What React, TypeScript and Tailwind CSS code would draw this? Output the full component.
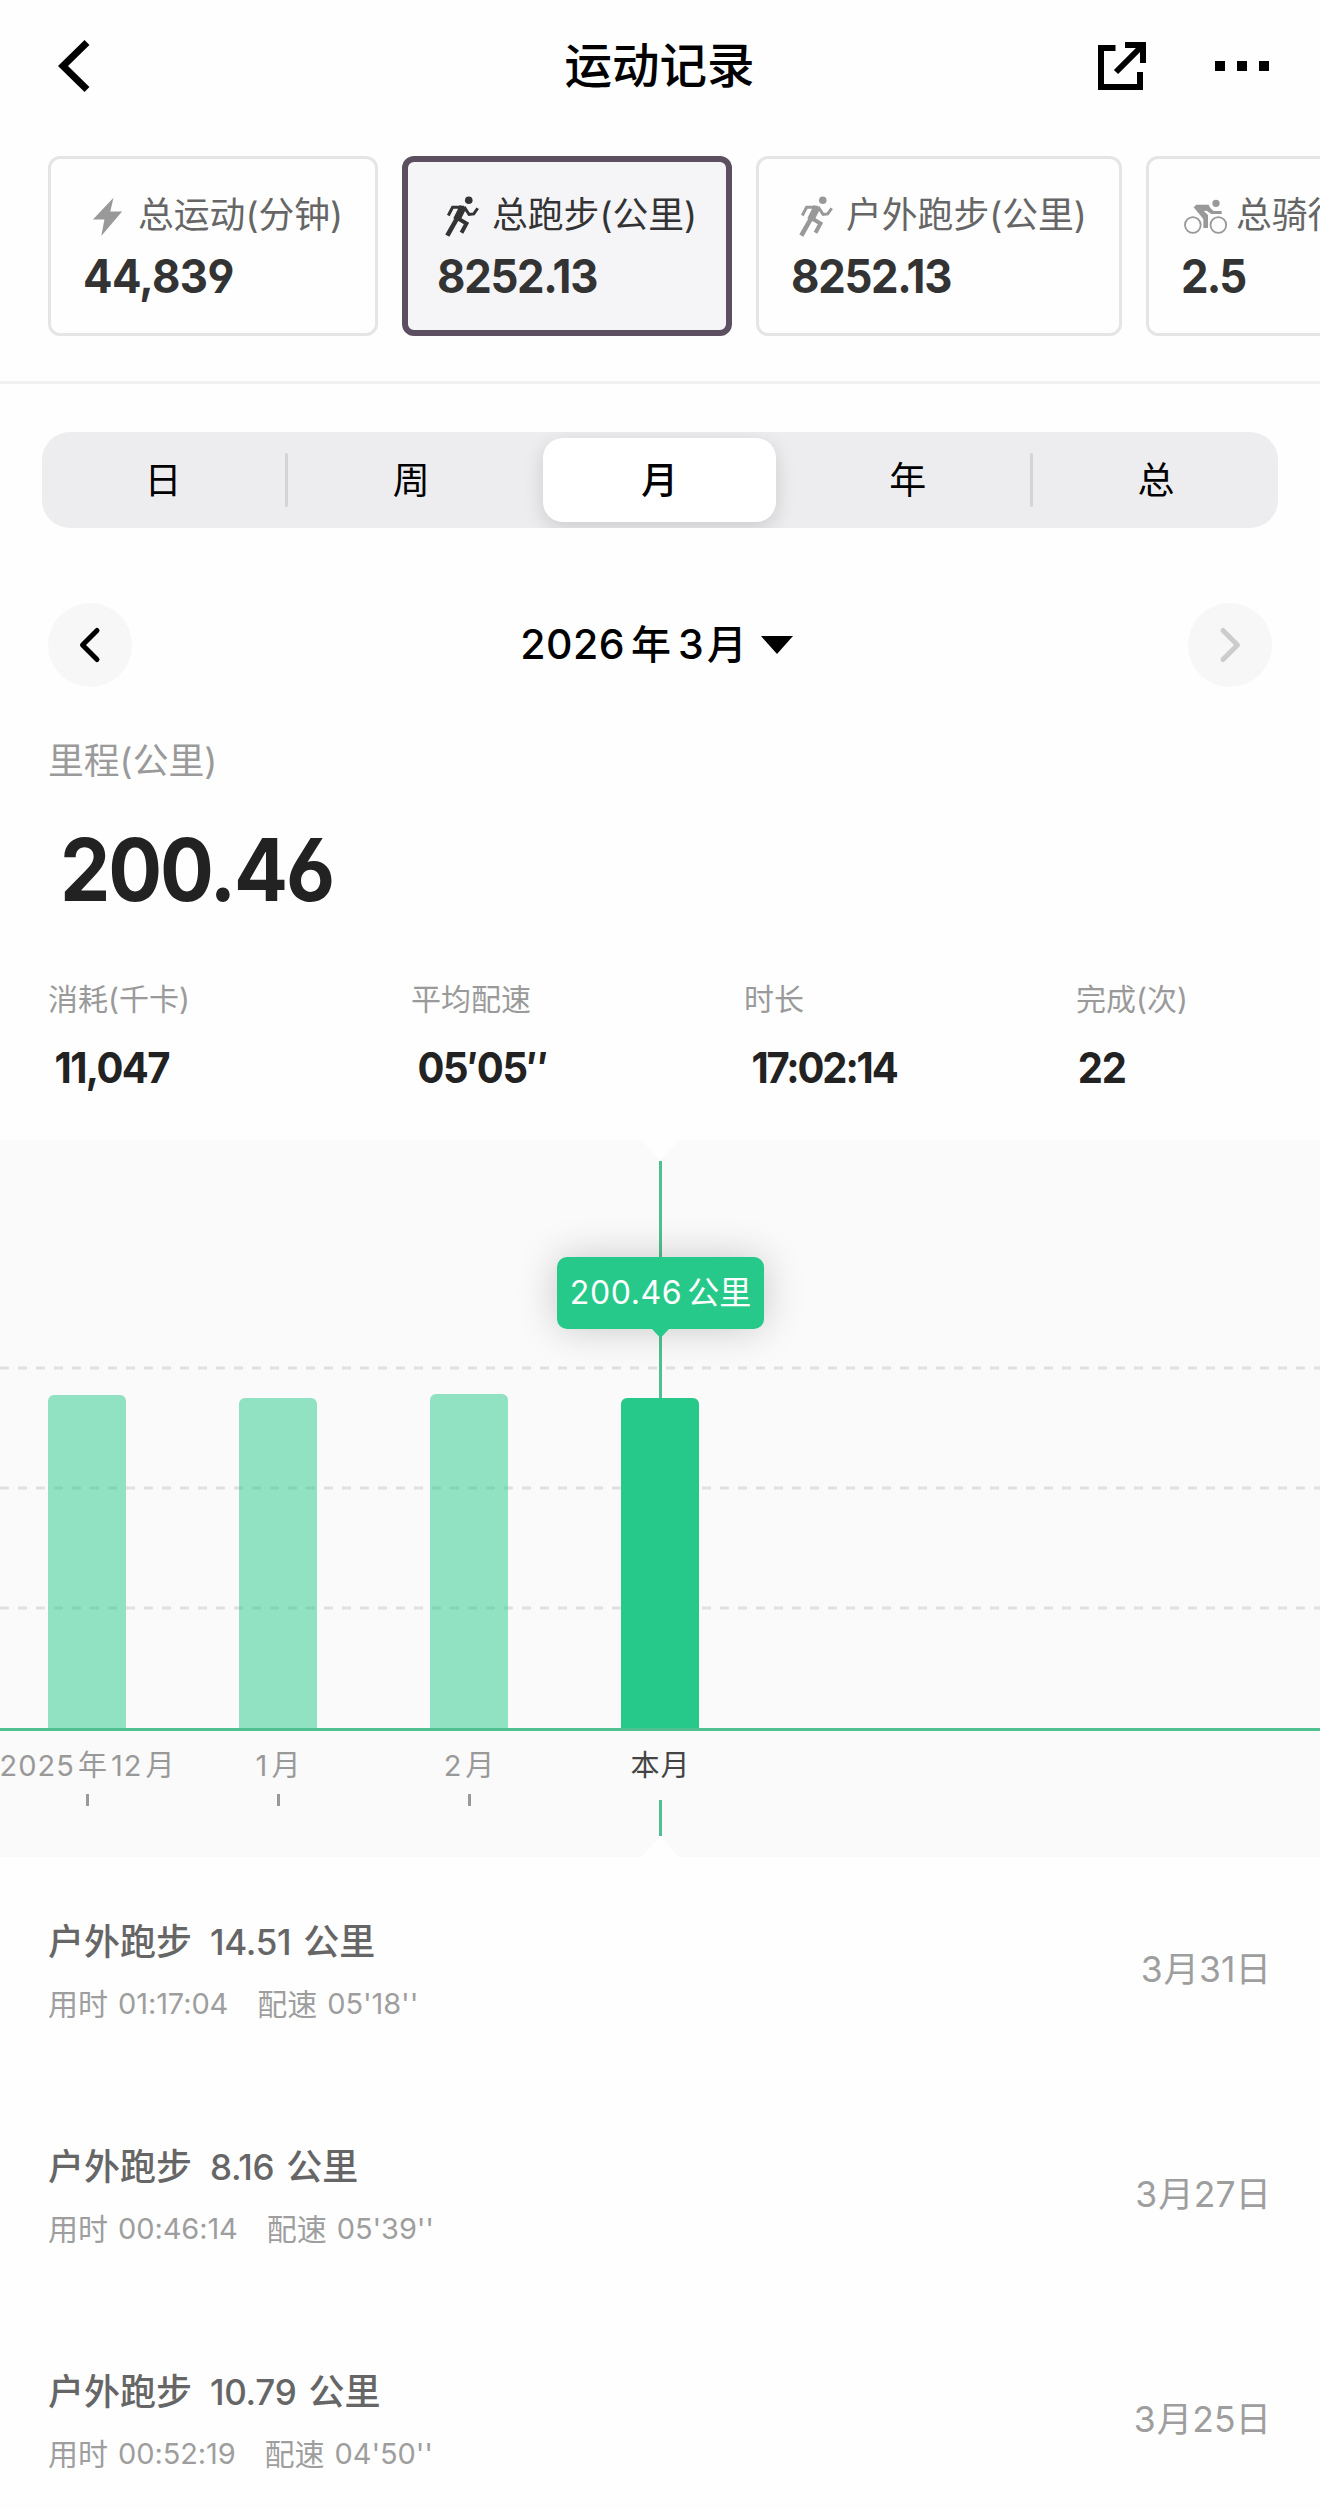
import { useState } from 'react';
import type { ReactNode } from 'react';
import clsx from 'clsx';

const CARDS = [
  { id: 'all', label: '总运动(分钟)', value: '44,839', icon: <BoltIcon />, width: 'w-[330px]', tracking: 'tracking-[-0.7px]' },
  { id: 'run', label: '总跑步(公里)', value: '8252.13', icon: <RunIcon />, width: 'w-[330px]', tracking: 'tracking-[-1.4px]' },
  { id: 'outdoor', label: '户外跑步(公里)', value: '8252.13', icon: <RunIcon />, width: 'w-[366px]', tracking: 'tracking-[-1.4px]' },
  { id: 'ride', label: '总骑行(公里)', value: '2.5', icon: <RideIcon />, width: 'w-[330px]', tracking: 'tracking-[-2px]' },
];

const PERIODS = ['日', '周', '月', '年', '总'];

const STATS = [
  { label: '消耗(千卡)', value: '11,047', width: 'w-[363px]', style: 'pl-[7px] tracking-[-1.7px]' },
  { label: '平均配速', value: '05′05″', width: 'w-[333px]', style: 'pl-[7px] tracking-[-1.5px]' },
  { label: '时长', value: '17:02:14', width: 'w-[332px]', style: 'pl-[8px] tracking-[-2.3px]' },
  { label: '完成(次)', value: '22', width: 'w-[180px]', style: 'pl-[2px] tracking-[-1.5px]' },
];

const BARS = [
  { label: ['2025', '年', '12', '月'], height: 333 },
  { label: ['1', '月'], height: 330 },
  { label: ['2', '月'], height: 334 },
  { label: ['本月'], height: 330, active: true },
];

const RECORDS = [
  { km: '14.51', time: '01:17:04', pace: "05'18''", day: '31' },
  { km: '8.16', time: '00:46:14', pace: "05'39''", day: '27' },
  { km: '10.79', time: '00:52:19', pace: "04'50''", day: '25' },
];

function BoltIcon() {
  return (
    <svg width="38" height="43" viewBox="90 194 38 43" fill="currentColor">
      <path d="M114.5 196.7 93.9 218.6h11.5L102.3 235l20.8-24.6h-11.8z" />
    </svg>
  );
}

function RunIcon() {
  return (
    <svg width="38" height="43" viewBox="70 70 115 130" fill="none" stroke="currentColor">
      <circle cx="148" cy="86" r="11.5" fill="currentColor" stroke="none" />
      <path d="M86 132 99 107h35" strokeWidth="9" />
      <path d="M131 105 111 145" strokeWidth="22" />
      <path d="M113 140 83 193" strokeWidth="14" />
      <path d="m114 140 27 16-15 28" strokeWidth="12" />
      <path d="m134 106 15 23 14-2 12-17" strokeWidth="9" />
    </svg>
  );
}

function RideIcon() {
  return (
    <svg width="44" height="43" viewBox="313 42 132 129" fill="none" stroke="currentColor">
      <circle cx="409" cy="67" r="11" fill="currentColor" stroke="none" />
      <circle cx="339.5" cy="132" r="23.5" strokeWidth="5.500" />
      <circle cx="416" cy="132" r="23.5" strokeWidth="5.500" />
      <path d="m342 79 8-8h37l5 10 10 9h24v9h-31l-14-10-9 1 13 12v39h-14v-27z" fill="currentColor" stroke="none" />
    </svg>
  );
}

// Numbers in the heavy display style: tight tracking, open 6 and 9.
function Figure({ className, children }: { className?: string; children: ReactNode }) {
  return (
    <span className={clsx("origin-left scale-x-[0.93] font-bold [font-feature-settings:'cv03','cv04']", className)}>
      {children}
    </span>
  );
}

function NavButton({ dir, disabled }: { dir: 'prev' | 'next'; disabled?: boolean }) {
  return (
    <button
      type="button"
      disabled={disabled}
      aria-label={dir}
      className={clsx(
        'flex size-[84px] items-center justify-center rounded-full bg-[#f7f7f7]',
        disabled ? 'text-[#cccccc]' : 'text-black',
      )}
    >
      <svg
        width="24"
        height="38"
        viewBox="0 0 24 38"
        fill="none"
        stroke="currentColor"
        strokeWidth="5"
        strokeLinecap="round"
        strokeLinejoin="round"
      >
        <path d={dir === 'prev' ? 'M19 4.5 4.5 19 19 33.5' : 'M5 4.5 19.5 19 5 33.5'} />
      </svg>
    </button>
  );
}

export default function App() {
  const [card, setCard] = useState('run');
  const [period, setPeriod] = useState('月');

  return (
    <div className="flex h-[2509px] w-[1320px] flex-col overflow-hidden bg-[#fefefe] font-['Inter','Noto_Sans_CJK_SC',sans-serif] text-black">
      <header className="grid h-[132px] shrink-0 grid-cols-3 items-center pr-[51px] pl-[57px]">
        <svg width="34" height="54" viewBox="0 0 34 54" fill="none" stroke="currentColor" strokeWidth="7">
          <path d="M30 3.5 6 27l24 23.5" />
        </svg>
        <h1 className="pr-[7px] text-center text-[47.5px] font-medium">运动记录</h1>
        <div className="flex items-center justify-end gap-[69px]">
          <svg width="48" height="48" viewBox="0 0 48 48" fill="none" stroke="currentColor" strokeWidth="6">
            <path d="M17.5 6H3v39h39V30M27 3h18v18M45 3 18 30" />
          </svg>
          <svg width="54" height="10" viewBox="0 0 54 10" fill="currentColor">
            <rect width="10" height="10" />
            <rect x="22" width="10" height="10" />
            <rect x="44" width="10" height="10" />
          </svg>
        </div>
      </header>

      <div className="flex shrink-0 gap-6 overflow-hidden border-b-[3px] border-[#f1f1f1] pt-6 pb-[45px] pl-12">
        {CARDS.map((c) => {
          const active = c.id === card;
          return (
            <button
              key={c.id}
              type="button"
              onClick={() => setCard(c.id)}
              className={clsx(
                'flex h-[180px] shrink-0 flex-col justify-center rounded-xl text-left',
                c.width,
                active ? 'border-[6px] border-[#5c5060] bg-[#f5f5f8] pl-[29px]' : 'border-[3px] border-[#e5e5e5] pl-[32px]',
              )}
            >
              <span className="flex h-[60px] items-center">
                <span className={clsx('flex w-[55px] justify-center pr-[5px]', active ? 'text-[#333333]' : 'text-[#999999]')}>
                  {c.icon}
                </span>
                <span
                  className={clsx('text-[35.8px] whitespace-nowrap', active ? 'text-[#333333]' : 'text-[#666666]')}
                >
                  {c.label}
                </span>
              </span>
              <Figure className={clsx('h-[60px] text-[47px] leading-[60px] text-[#333333]', c.tracking)}>{c.value}</Figure>
            </button>
          );
        })}
      </div>

      <div className="mx-[42px] mt-12 h-24 shrink-0 overflow-hidden rounded-[28px] bg-[#ededef] py-[6px]">
        <div className="-mr-[2px] -ml-[3px] flex items-center">
          {PERIODS.map((p, i) => (
            <div key={p} className="flex flex-1 items-center">
              <button
                type="button"
                onClick={() => setPeriod(p)}
                className={clsx(
                  'mx-2 h-[84px] flex-1 rounded-[20px] pt-[2px] text-[37px]',
                  p === period && 'bg-white font-medium shadow-[0_6px_20px_rgba(0,0,0,0.14)]',
                )}
              >
                {p}
              </button>
              {(i === 0 || i === 3) && (
                <span className="-mr-[1px] -ml-[2px] h-[54px] w-[3px] rounded-full bg-[#d4d4d6]" />
              )}
            </div>
          ))}
        </div>
      </div>

      <div className="mt-[75px] flex h-[84px] shrink-0 items-center justify-between px-12">
        <NavButton dir="prev" />
        <button type="button" className="-ml-[7px] flex items-center text-[41px] font-medium">
          <span className="tracking-[0.5px]">2026</span>
          <span className="ml-[6px] text-[40px]">年</span>
          <span className="ml-[7px]">3</span>
          <span className="ml-[3px] text-[40px]">月</span>
          <svg className="ml-[14px]" width="32" height="18" viewBox="0 0 32 18" fill="currentColor">
            <path d="M0 0h32L16 18z" />
          </svg>
        </button>
        <NavButton dir="next" disabled />
      </div>

      <section className="shrink-0 px-12 text-[#222222]">
        <p className="mt-[47px] h-[54px] text-[35.8px] leading-[54px] text-[#9a9a9a]">里程(公里)</p>
        <p className="mt-8 flex pl-[12px]">
          <Figure className="text-[86px] leading-[100px] tracking-[-2.3px]">200.46</Figure>
        </p>
        <div className="mt-[58px] flex">
          {STATS.map((s) => (
            <div key={s.label} className={clsx('flex shrink-0 flex-col', s.width)}>
              <span className="text-3xl leading-[42px] text-[#9a9a9a]">{s.label}</span>
              <Figure className={clsx('mt-5 text-[43px] leading-[54px]', s.style)}>{s.value}</Figure>
            </div>
          ))}
        </div>
      </section>

      <section className="relative mt-[46px] h-[717px] shrink-0 overflow-hidden bg-[#fafafa]">
        <div className="relative flex h-[588px] items-end gap-[113px] pl-12">
          <svg className="absolute inset-0" width="1320" height="588" fill="none" stroke="#e0e0e0" strokeWidth="3">
            <path d="M0 228h1320M0 348h1320M0 468h1320" strokeDasharray="9 9" />
          </svg>
          {BARS.map((b) => (
            <div
              key={b.label.join('')}
              className={clsx('relative w-[78px] rounded-t-md', b.active ? 'bg-[#26c989]' : 'bg-[#26c989]/50')}
              style={{ height: b.height }}
            />
          ))}
        </div>
        <div className="h-[3px] bg-[#50c093]" />
        <div className="-ml-2 flex">
          {BARS.map((b) => (
            <div key={b.label.join('')} className="flex w-[191px] flex-col items-center">
              <span
                className={clsx(
                  'mt-[14px] flex gap-[3px] text-[29px] leading-[42px] tracking-[1px] whitespace-nowrap',
                  b.active ? 'text-[#444444]' : 'text-[#999999]',
                )}
              >
                {b.label.map((part) => (
                  <span key={part}>{part}</span>
                ))}
              </span>
              {b.active ? (
                <span className="mt-[13px] h-9 w-[3px] bg-[#50c093]" />
              ) : (
                <span className="mt-[7px] h-3 w-[3px] bg-[#999999]" />
              )}
            </div>
          ))}
        </div>

        {/* marker for the selected month */}
        <svg className="absolute top-0 left-[640px]" width="40" height="717" fill="#fefefe">
          <path d="M1 0h38L20.500 20zM1 717h38L20.500 696z" />
          <path d="M19 21h3v237h-3z" fill="#50c093" />
        </svg>
        <div className="absolute top-[117px] left-[557px] flex h-[72px] w-[207px] items-center justify-center gap-[5px] rounded-[10px] bg-[#26c989] text-[32px] text-white shadow-[0_0_40px_rgba(0,0,0,0.2)]">
          <span className="tracking-[0.6px]">200.46</span>
          <span>公里</span>
          <svg className="absolute top-[71px] left-[94px]" width="19" height="10" fill="#26c989">
            <path d="M0 0h19L9.500 10z" />
          </svg>
        </div>
      </section>

      <ul className="shrink-0 px-12">
        {RECORDS.map((r) => (
          <li key={r.day} className="flex h-[225px] items-center justify-between">
            <div className="flex flex-col gap-[14px]">
              <div className="flex text-4xl leading-[54px] font-medium text-[#666666]">
                <span>户外跑步</span>
                <span className="ml-[18px] text-[35px] tracking-[-0.3px]">{r.km}</span>
                <span className="ml-[12px]">公里</span>
              </div>
              <div className="flex text-[30px] leading-[42px] text-[#9e9e9e]">
                <span>用时</span>
                <span className="ml-[10px] text-[29px] tracking-[-0.1px]">{r.time}</span>
                <span className="ml-[29px]">配速</span>
                <span className="ml-[10px] text-[29px] tracking-[-0.1px]">{r.pace}</span>
              </div>
            </div>
            <div className="flex items-baseline pr-[1px] text-[35.5px] text-[#9e9e9e]">
              <span>3</span>
              <span className="ml-[1px]">月</span>
              <span>{r.day}</span>
              <span>日</span>
            </div>
          </li>
        ))}
      </ul>
    </div>
  );
}
